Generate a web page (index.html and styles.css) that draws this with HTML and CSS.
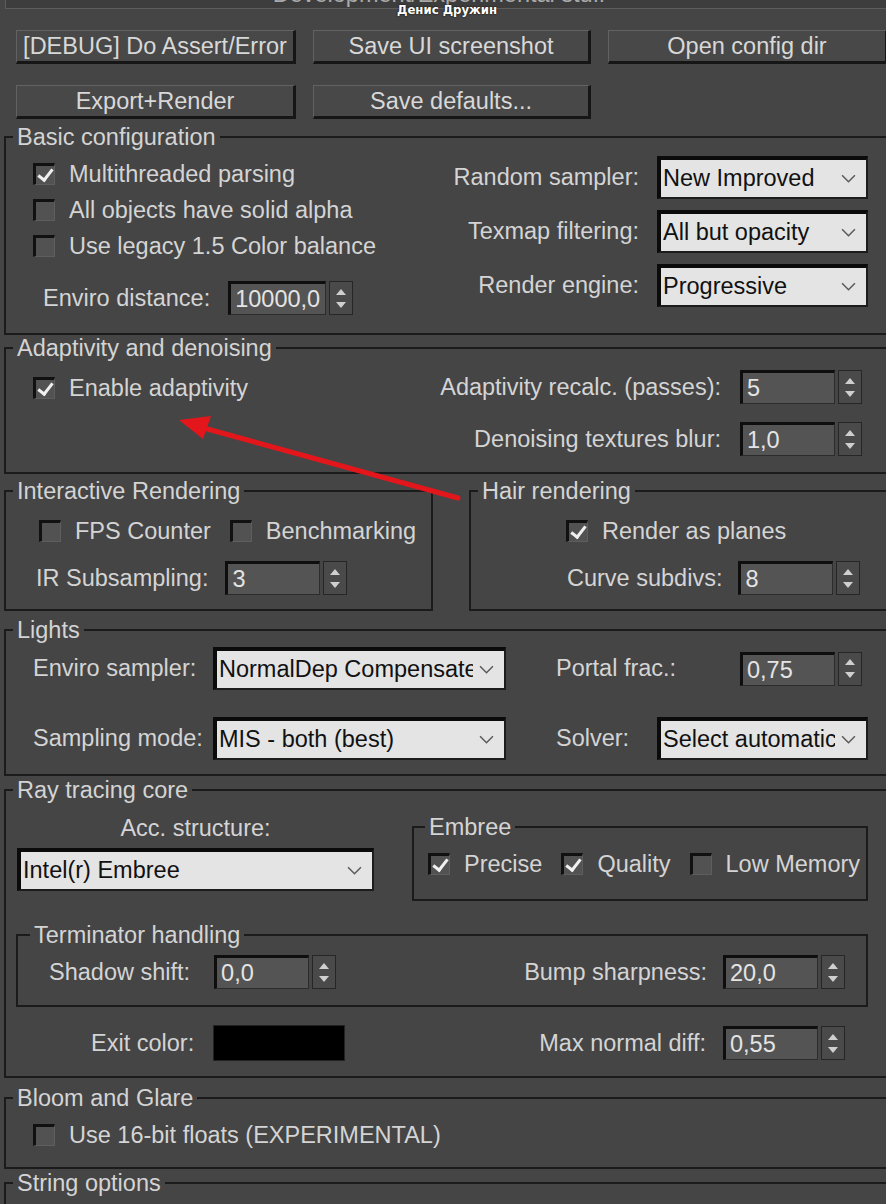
FILE: index.html
```html
<!DOCTYPE html>
<html lang="en">
<head>
  <meta charset="UTF-8">
  <meta name="viewport" content="width=device-width, initial-scale=1.0">
  <title>Development/Experimental stuff</title>
  <link rel="stylesheet" href="styles.css">
</head>
<body>
<div class="panel">
  <div class="rollout-title"><span>Development/Experimental stuff</span></div>
  <div class="author">Денис Дружин</div>

  <div class="buttons">
    <button class="btn">[DEBUG] Do Assert/Error</button>
    <button class="btn">Save UI screenshot</button>
    <button class="btn">Open config dir</button>
    <button class="btn">Export+Render</button>
    <button class="btn">Save defaults...</button>
  </div>

  <fieldset class="group basic">
    <legend>Basic configuration</legend>
    <div class="split">
      <div class="stack">
        <div class="check"><span class="box on"></span>Multithreaded parsing</div>
        <div class="check"><span class="box"></span>All objects have solid alpha</div>
        <div class="check"><span class="box"></span>Use legacy 1.5 Color balance</div>
        <div class="field enviro">
          <span>Enviro distance:</span>
          <div class="spin wide"><div class="spin-val">10000,0</div><div class="spin-btn"><i class="up"></i><i class="down"></i></div></div>
        </div>
      </div>
      <div class="form-grid selects">
        <span class="lbl">Random sampler:</span>
        <div class="select w211"><span class="sel-text">New Improved</span><svg class="chev" viewBox="0 0 14 8"><path d="M1 1l6 6 6-6"/></svg></div>
        <span class="lbl">Texmap filtering:</span>
        <div class="select w211"><span class="sel-text">All but opacity</span><svg class="chev" viewBox="0 0 14 8"><path d="M1 1l6 6 6-6"/></svg></div>
        <span class="lbl">Render engine:</span>
        <div class="select w211"><span class="sel-text">Progressive</span><svg class="chev" viewBox="0 0 14 8"><path d="M1 1l6 6 6-6"/></svg></div>
      </div>
    </div>
  </fieldset>

  <fieldset class="group adapt">
    <legend>Adaptivity and denoising</legend>
    <div class="split">
      <div class="check"><span class="box on"></span>Enable adaptivity</div>
      <div class="form-grid spins">
        <span class="lbl">Adaptivity recalc. (passes):</span>
        <div class="spin"><div class="spin-val">5</div><div class="spin-btn"><i class="up"></i><i class="down"></i></div></div>
        <span class="lbl">Denoising textures blur:</span>
        <div class="spin"><div class="spin-val">1,0</div><div class="spin-btn"><i class="up"></i><i class="down"></i></div></div>
      </div>
    </div>
  </fieldset>

  <div class="pair">
    <fieldset class="group interactive">
      <legend>Interactive Rendering</legend>
      <div class="checks-row">
        <div class="check"><span class="box"></span>FPS Counter</div>
        <div class="check"><span class="box"></span>Benchmarking</div>
      </div>
      <div class="field ir">
        <span>IR Subsampling:</span>
        <div class="spin"><div class="spin-val">3</div><div class="spin-btn"><i class="up"></i><i class="down"></i></div></div>
      </div>
    </fieldset>
    <fieldset class="group hair">
      <legend>Hair rendering</legend>
      <div class="check planes"><span class="box on"></span>Render as planes</div>
      <div class="field curve">
        <span>Curve subdivs:</span>
        <div class="spin"><div class="spin-val">8</div><div class="spin-btn"><i class="up"></i><i class="down"></i></div></div>
      </div>
    </fieldset>
  </div>

  <fieldset class="group lights">
    <legend>Lights</legend>
    <div class="light-row">
      <span class="lbl-main">Enviro sampler:</span>
      <div class="select w293"><span class="sel-text">NormalDep Compensated</span><svg class="chev" viewBox="0 0 14 8"><path d="M1 1l6 6 6-6"/></svg></div>
      <span class="lbl-side portal">Portal frac.:</span>
      <div class="spin"><div class="spin-val">0,75</div><div class="spin-btn"><i class="up"></i><i class="down"></i></div></div>
    </div>
    <div class="light-row">
      <span class="lbl-main">Sampling mode:</span>
      <div class="select w293"><span class="sel-text">MIS - both (best)</span><svg class="chev" viewBox="0 0 14 8"><path d="M1 1l6 6 6-6"/></svg></div>
      <span class="lbl-side solver">Solver:</span>
      <div class="select w211"><span class="sel-text">Select automatically</span><svg class="chev" viewBox="0 0 14 8"><path d="M1 1l6 6 6-6"/></svg></div>
    </div>
  </fieldset>

  <fieldset class="group ray">
    <legend>Ray tracing core</legend>
    <div class="ray-top">
      <div class="acc">
        <div class="acc-label">Acc. structure:</div>
        <div class="select w357"><span class="sel-text">Intel(r) Embree</span><svg class="chev" viewBox="0 0 14 8"><path d="M1 1l6 6 6-6"/></svg></div>
      </div>
      <fieldset class="group embree">
        <legend>Embree</legend>
        <div class="checks-row">
          <div class="check"><span class="box on"></span>Precise</div>
          <div class="check"><span class="box on"></span>Quality</div>
          <div class="check"><span class="box"></span>Low Memory</div>
        </div>
      </fieldset>
    </div>
    <fieldset class="group terminator">
      <legend>Terminator handling</legend>
      <div class="term-row">
        <div class="field shadow">
          <span>Shadow shift:</span>
          <div class="spin"><div class="spin-val">0,0</div><div class="spin-btn"><i class="up"></i><i class="down"></i></div></div>
        </div>
        <div class="field">
          <span>Bump sharpness:</span>
          <div class="spin"><div class="spin-val">20,0</div><div class="spin-btn"><i class="up"></i><i class="down"></i></div></div>
        </div>
      </div>
    </fieldset>
    <div class="exit-row">
      <div class="field exit">
        <span>Exit color:</span>
        <div class="swatch"></div>
      </div>
      <div class="field">
        <span>Max normal diff:</span>
        <div class="spin"><div class="spin-val">0,55</div><div class="spin-btn"><i class="up"></i><i class="down"></i></div></div>
      </div>
    </div>
  </fieldset>

  <fieldset class="group bloom">
    <legend>Bloom and Glare</legend>
    <div class="check"><span class="box"></span>Use 16-bit floats (EXPERIMENTAL)</div>
  </fieldset>

  <fieldset class="group strings">
    <legend>String options</legend>
  </fieldset>

  <svg class="annotation" viewBox="0 0 886 1204" width="886" height="1204">
    <line x1="458" y1="498" x2="200" y2="427" stroke="#e3161b" stroke-width="5" stroke-linecap="round"/>
    <polygon points="179,420 211,416 203,439" fill="#e3161b"/>
  </svg>
</div>
</body>
</html>
```

FILE: styles.css
```css
* {
  box-sizing: border-box;
}

body {
  margin: 0;
  background: #454545;
  color: #d4d4d4;
  font-family: "Liberation Sans", Arial, sans-serif;
  font-size: 23.5px;
  overflow: hidden;
}

.panel {
  position: relative;
  width: 896px;
  height: 1204px;
}

/* rollout header, mostly scrolled out of view */
.rollout-title {
  height: 9px;
  margin-left: 5px;
  background: #3d3d3d;
  border-left: 1px solid #5c5c5c;
  border-bottom: 1px solid #5c5c5c;
  overflow: hidden;
}

.rollout-title span {
  display: block;
  margin-top: -18px;
  margin-left: -10px;
  line-height: 24px;
  text-align: center;
  width: 886px;
  color: #aaaaaa;
}

.author {
  position: absolute;
  top: 2px;
  left: 397px;
  font-family: "DejaVu Sans Condensed", "DejaVu Sans", sans-serif;
  font-weight: bold;
  font-size: 13px;
  color: #ffffff;
  text-shadow: 0 0 2px #000;
}

.buttons {
  display: grid;
  grid-template-columns: 280px 278px 280px;
  column-gap: 17px;
  row-gap: 21px;
  margin: 21px 0 0 16px;
}

.btn {
  height: 34px;
  padding: 0;
  font: inherit;
  color: #d8d8d8;
  background: #484848;
  border-top: 1px solid #626262;
  border-left: 1px solid #626262;
  border-right: 3px solid #161616;
  border-bottom: 3px solid #161616;
}

/* group boxes */
.group {
  margin: 0 0 0 4px;
  padding: 0;
  min-width: 0;
  border: 2px solid #1b1b1b;
}

.group legend {
  margin-left: 7px;
  padding: 0 4px;
  line-height: 24px;
}

.check {
  display: flex;
  align-items: center;
  gap: 14px;
  height: 36px;
  white-space: nowrap;
}

.box {
  position: relative;
  width: 22px;
  height: 22px;
  flex: none;
  background: #525252;
  border-top: 3px solid #111;
  border-left: 3px solid #111;
  border-right: 1px solid #5e5e5e;
  border-bottom: 1px solid #5e5e5e;
}

.box.on::after {
  content: '';
  position: absolute;
  left: 5px;
  top: 0;
  width: 6px;
  height: 12px;
  border: solid #f0f0f0;
  border-width: 0 3px 3px 0;
  transform: rotate(38deg);
}

.field {
  display: flex;
  align-items: center;
  white-space: nowrap;
}

/* spinner */
.spin {
  display: flex;
  gap: 3px;
  height: 34px;
  flex: none;
}

.spin-val {
  width: 95px;
  padding-left: 4px;
  line-height: 30px;
  color: #e4e4e4;
  background: #545454;
  border-top: 3px solid #0e0e0e;
  border-left: 3px solid #0e0e0e;
  border-right: 1px solid #2c2c2c;
  border-bottom: 1px solid #2c2c2c;
  overflow: hidden;
  white-space: nowrap;
}

.spin.wide .spin-val {
  width: 98px;
}

.spin-btn {
  width: 24px;
  display: flex;
  flex-direction: column;
  align-items: center;
  justify-content: center;
  gap: 7px;
  background: #4a4a4a;
  border: 1px solid #262626;
}

.spin-btn .up {
  border-left: 5px solid transparent;
  border-right: 5px solid transparent;
  border-bottom: 6px solid #cfcfcf;
}

.spin-btn .down {
  border-left: 5px solid transparent;
  border-right: 5px solid transparent;
  border-top: 6px solid #cfcfcf;
}

/* dropdown */
.select {
  display: flex;
  align-items: center;
  height: 43px;
  padding: 0 10px 0 2px;
  color: #111;
  background: #e4e4e4;
  border-top: 4px solid #0b0b0b;
  border-left: 4px solid #0b0b0b;
  border-right: 2px solid #1c1c1c;
  border-bottom: 2px solid #1c1c1c;
}

.sel-text {
  flex: 1;
  overflow: hidden;
  white-space: nowrap;
}

.chev {
  width: 15px;
  height: 9px;
  margin-left: 6px;
  flex: none;
  fill: none;
  stroke: #5a5a5a;
  stroke-width: 1.4;
}

.w211 { width: 211px; }
.w293 { width: 293px; }
.w357 { width: 357px; }

.form-grid {
  display: grid;
  grid-template-columns: auto auto;
  align-items: center;
}

.form-grid .lbl {
  justify-self: end;
  white-space: nowrap;
}

/* basic configuration */
.basic {
  margin-top: 6px;
}

.split {
  display: flex;
  justify-content: space-between;
  align-items: flex-start;
}

.basic .split {
  padding: 7px 26px 18px 27px;
}

.stack {
  display: flex;
  flex-direction: column;
}

.enviro {
  margin: 17px 0 0 10px;
  gap: 18px;
}

.selects {
  column-gap: 18px;
  row-gap: 11px;
}

/* adaptivity */
.adapt {
  margin-top: 1px;
}

.adapt .split {
  padding: 10px 32px 16px 27px;
}

.spins {
  column-gap: 19px;
  row-gap: 18px;
}

/* interactive + hair */
.pair {
  display: flex;
  margin: 5px 0 0 4px;
}

.pair .group {
  margin-left: 0;
}

.interactive {
  width: 429px;
  padding: 10px 0 14px 33px;
}

.interactive legend {
  margin-left: -26px;
}

.checks-row {
  display: flex;
}

.checks-row .check + .check {
  margin-left: 19px;
}

.ir {
  margin: 12px 0 0 -3px;
  gap: 17px;
}

.pair .hair {
  flex: 1;
  margin-left: 36px;
  padding: 10px 0 14px 0;
}

.planes {
  margin-left: 95px;
}

.curve {
  margin: 12px 0 0 96px;
  gap: 16px;
}

/* lights */
.lights {
  margin-top: 7px;
  padding: 5px 0 14px 27px;
}

.lights legend,
.bloom legend {
  margin-left: -20px;
}

.light-row {
  display: flex;
  align-items: center;
  height: 43px;
  white-space: nowrap;
}

.light-row + .light-row {
  margin-top: 27px;
}

.lbl-main {
  width: 180px;
}

.lbl-side {
  margin-left: 50px;
}

.portal { width: 184px; }
.solver { width: 101px; }

/* ray tracing core */
.ray {
  margin-top: 2px;
}

.ray-top {
  display: flex;
  align-items: flex-start;
  padding: 14px 0 0 11px;
}

.acc-label {
  line-height: 24px;
  text-align: center;
  margin-bottom: 8px;
}

.ray .embree {
  width: 456px;
  margin: -1px 0 0 38px;
  padding: 7px 0 17px 14px;
}

.embree legend {
  margin-left: -3px;
}

.terminator legend {
  margin-left: -19px;
}

.ray .terminator {
  margin: 22px 26px 0 10px;
  padding: 8px 21px 16px 31px;
}

.term-row,
.exit-row {
  display: flex;
  justify-content: space-between;
  align-items: center;
}

.term-row .field {
  gap: 16px;
}

.term-row .shadow {
  gap: 24px;
}

.exit-row {
  height: 36px;
  margin: 18px 49px 15px 85px;
}

.exit-row .field {
  gap: 17px;
}

.exit-row .exit {
  gap: 19px;
}

.swatch {
  width: 132px;
  height: 36px;
  background: #000;
  border: 1px solid #222;
}

/* bloom, strings */
.bloom {
  margin-top: 8px;
  padding: 7px 0 14px 27px;
}

.strings {
  margin-top: 2px;
  height: 80px;
}

.annotation {
  position: absolute;
  top: 0;
  left: 0;
  pointer-events: none;
}
```
